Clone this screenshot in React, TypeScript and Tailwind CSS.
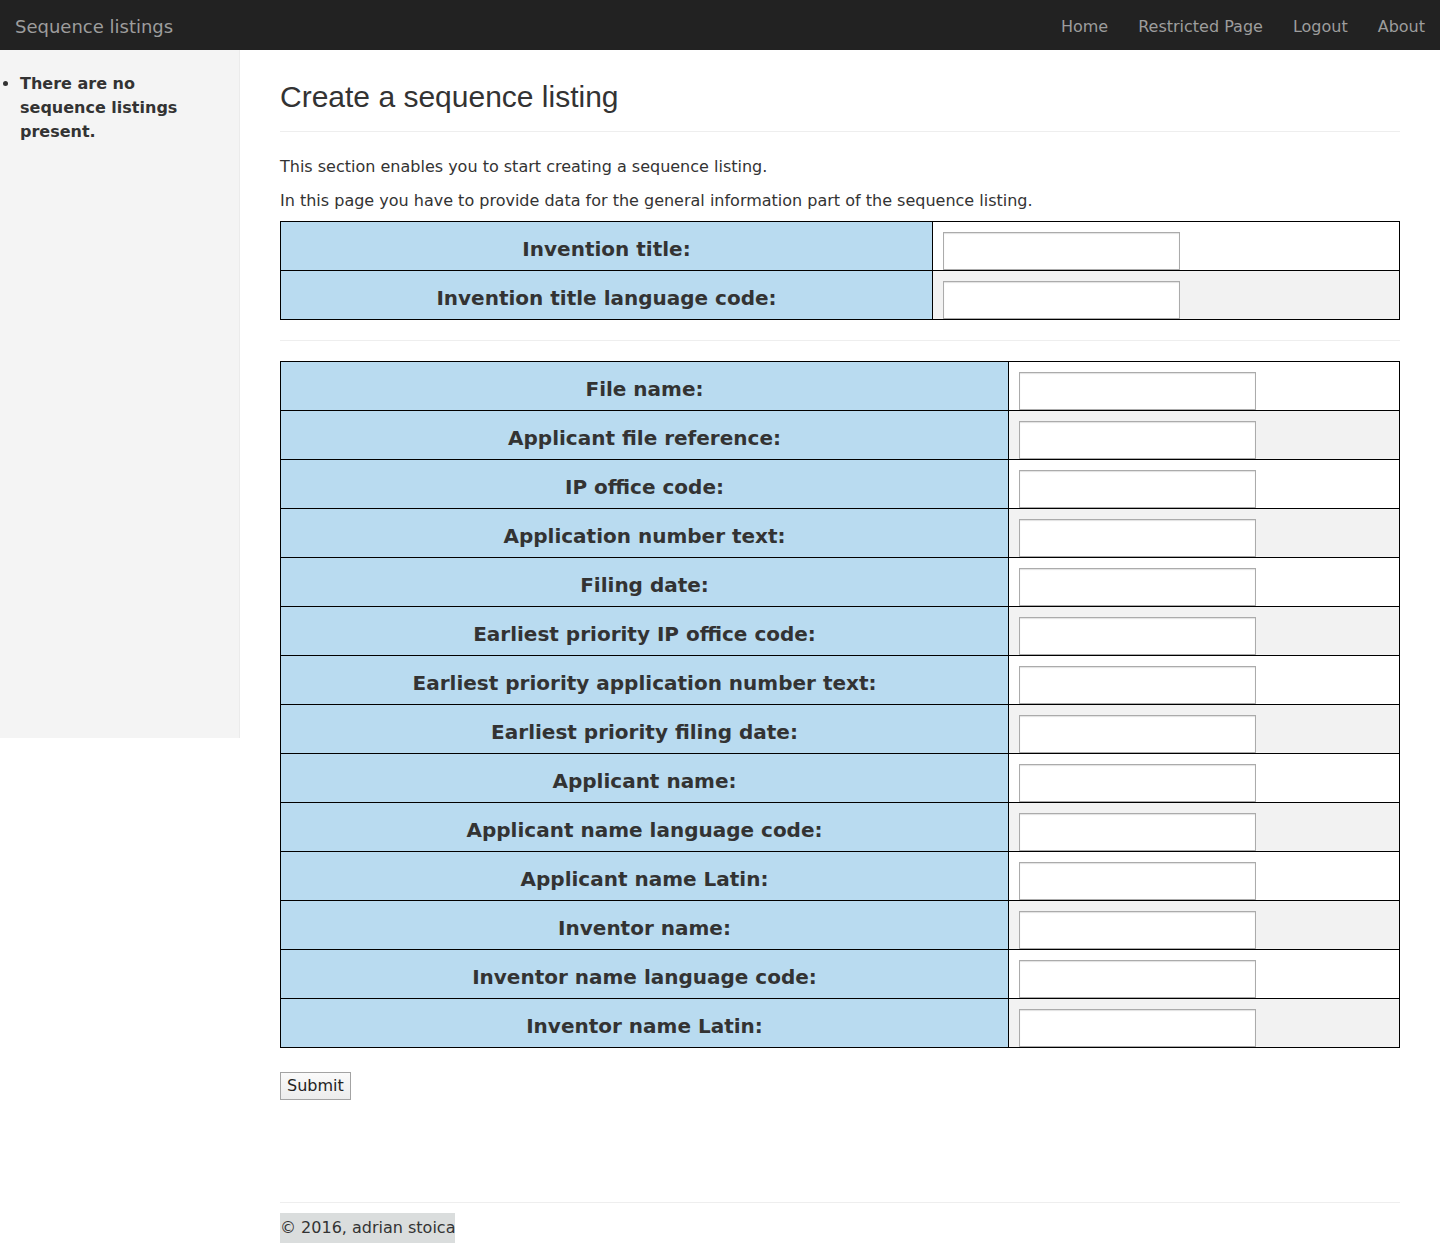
import React from "react";

const generalRows = ["Invention title:", "Invention title language code:"];

const fileRows = [
  "File name:",
  "Applicant file reference:",
  "IP office code:",
  "Application number text:",
  "Filing date:",
  "Earliest priority IP office code:",
  "Earliest priority application number text:",
  "Earliest priority filing date:",
  "Applicant name:",
  "Applicant name language code:",
  "Applicant name Latin:",
  "Inventor name:",
  "Inventor name language code:",
  "Inventor name Latin:",
];

const navLinks = ["Home", "Restricted Page", "Logout", "About"];

const FormTable: React.FC<{ rows: string[]; labelWidth: string }> = ({ rows, labelWidth }) => (
  <table className="w-full border-collapse border border-black">
    <tbody>
      {rows.map((label, i) => (
        <tr key={label}>
          <td
            className={`${labelWidth} border border-black bg-[#b9dbf0] text-center align-middle pt-[6px] text-[20px] font-bold text-[#333]`}
          >
            {label}
          </td>
          <td
            className={`border border-black align-top pt-[10px] pl-[10px] pb-0 ${
              i % 2 === 1 ? "bg-[#f2f2f2]" : "bg-white"
            }`}
          >
            <input
              type="text"
              className="block w-[237px] h-[38px] bg-white border border-[#ababab] shadow-[inset_0_1px_1px_rgba(0,0,0,0.12)] outline-none"
            />
          </td>
        </tr>
      ))}
    </tbody>
  </table>
);

const App: React.FC = () => {
  return (
    <div className="min-h-[1247px] bg-white font-['DejaVu_Sans',Verdana,sans-serif] text-[#333]">
      <nav className="h-[50px] bg-[#222] flex items-start justify-between">
        <a href="#" className="pl-[15px] pt-[3px] text-[18px] leading-[47px] text-[#9d9d9d]">
          Sequence listings
        </a>
        <ul className="flex">
          {navLinks.map((link) => (
            <li key={link}>
              <a href="#" className="block px-[15px] pt-[3px] text-[16px] leading-[47px] text-[#9d9d9d]">
                {link}
              </a>
            </li>
          ))}
        </ul>
      </nav>

      <div className="flex items-start">
        <aside className="w-[240px] h-[688px] shrink-0 bg-[#f4f4f4] border-r border-[#ebebeb]">
          <ul className="list-disc pl-[20px] pt-[22px] pr-[50px]">
            <li className="text-[16px] leading-[24px] font-bold text-[#333]">
              There are no sequence listings present.
            </li>
          </ul>
        </aside>

        <main className="flex-1 px-[40px]">
          <h2 className="mt-[30px] pb-[18px] border-b border-[#eee] font-['Liberation_Sans',Arial,sans-serif] text-[30px] leading-[33px] text-[#333]">
            Create a sequence listing
          </h2>

          <p className="mt-[25px] text-[16px] leading-[20px]">
            This section enables you to start creating a sequence listing.
          </p>
          <p className="mt-[14px] text-[16px] leading-[20px]">
            In this page you have to provide data for the general information part of the sequence listing.
          </p>

          <form className="mt-[10px]" onSubmit={(e) => e.preventDefault()}>
            <FormTable rows={generalRows} labelWidth="w-[652px]" />

            <hr className="my-[20px] border-0 border-t border-[#eee]" />

            <FormTable rows={fileRows} labelWidth="w-[728px]" />

            <button
              type="submit"
              className="mt-[24px] h-[28px] px-[6px] border border-[#a3a3a3] bg-gradient-to-b from-[#fafafa] to-[#ececec] text-[16px] text-[#222]"
            >
              Submit
            </button>
          </form>

          <footer className="mt-[102px] border-t border-[#eee] pt-[10px]">
            <span className="inline-block h-[30px] leading-[30px] text-[16px] bg-[#dadddd] text-[#333]">
              © 2016, adrian stoica
            </span>
          </footer>
        </main>
      </div>
    </div>
  );
};

export default App;
